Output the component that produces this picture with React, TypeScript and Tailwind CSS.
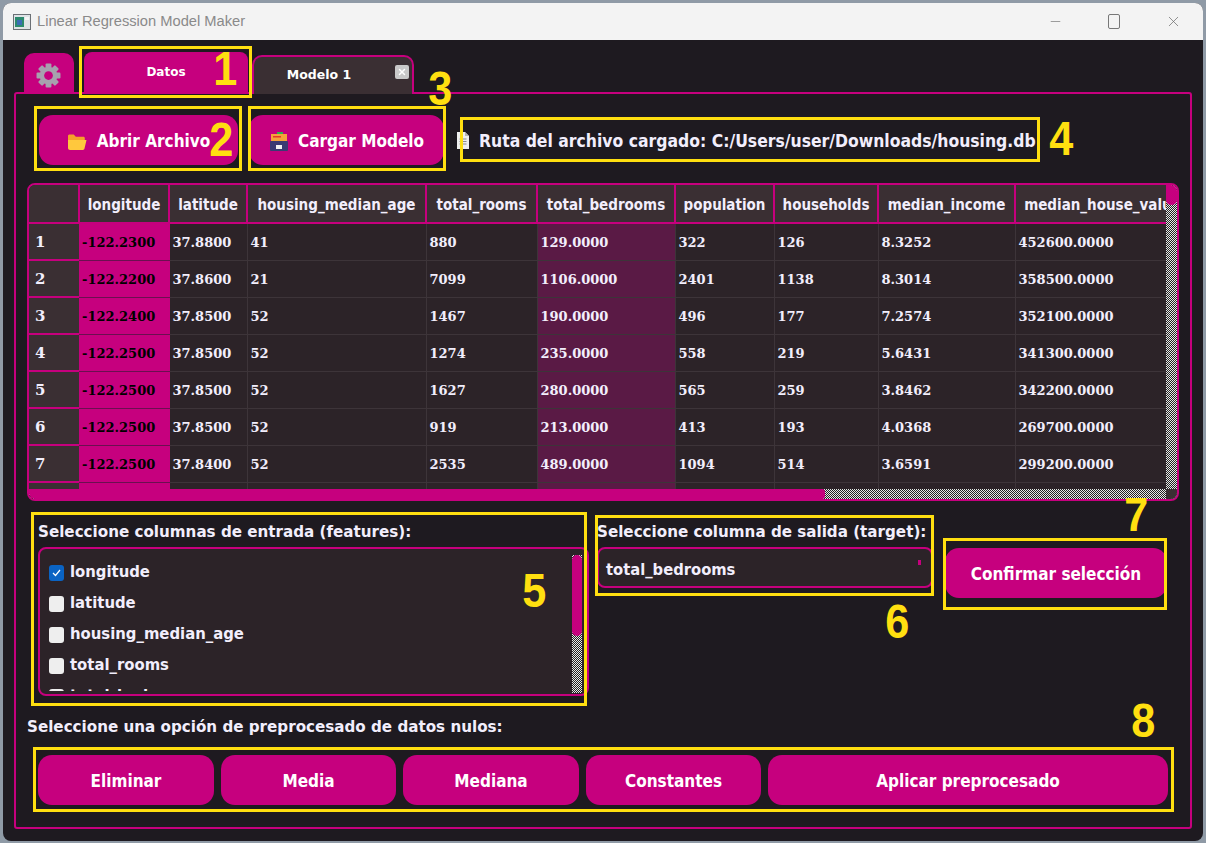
import { Minus, X } from 'lucide-react';

const columns = [
  { name: 'longitude', w: 'w-[90px]' },
  { name: 'latitude', w: 'w-[78px]' },
  { name: 'housing_median_age', w: 'w-[179px]' },
  { name: 'total_rooms', w: 'w-[111px]' },
  { name: 'total_bedrooms', w: 'w-[138px]' },
  { name: 'population', w: 'w-[99px]' },
  { name: 'households', w: 'w-[104px]' },
  { name: 'median_income', w: 'w-[137px]' },
  { name: 'median_house_value', w: 'w-[175px]' },
];

const rows = [
  ['-122.2300', '37.8800', '41', '880', '129.0000', '322', '126', '8.3252', '452600.0000'],
  ['-122.2200', '37.8600', '21', '7099', '1106.0000', '2401', '1138', '8.3014', '358500.0000'],
  ['-122.2400', '37.8500', '52', '1467', '190.0000', '496', '177', '7.2574', '352100.0000'],
  ['-122.2500', '37.8500', '52', '1274', '235.0000', '558', '219', '5.6431', '341300.0000'],
  ['-122.2500', '37.8500', '52', '1627', '280.0000', '565', '259', '3.8462', '342200.0000'],
  ['-122.2500', '37.8500', '52', '919', '213.0000', '413', '193', '4.0368', '269700.0000'],
  ['-122.2500', '37.8400', '52', '2535', '489.0000', '1094', '514', '3.6591', '299200.0000'],
  ['', '', '', '', '', '', '', '', ''],
];

const features = ['longitude', 'latitude', 'housing_median_age', 'total_rooms', 'total_bedrooms'];

const checker = 'bg-[conic-gradient(#e8e8e8_25%,#222_0_50%,#e8e8e8_0_75%,#222_0)] bg-[length:2px_2px]';
const condensed = "font-['DejaVu_Sans_Condensed','DejaVu_Sans',sans-serif]";

function Mark({ className }: { className: string }) {
  return <div className={`absolute z-20 border-[3px] border-[#ffdf10] pointer-events-none ${className}`} />;
}

function Num({ n, className }: { n: string; className: string }) {
  return (
    <div className={`absolute z-20 text-[48px] leading-none font-bold text-[#ffdf10] scale-x-[0.9] font-['Liberation_Sans',sans-serif] pointer-events-none ${className}`}>
      {n}
    </div>
  );
}

function FolderIcon() {
  return (
    <svg width="20" height="18" viewBox="0 0 20 18">
      <path d="M1 3C1 2 1.800 1.500 2.600 1.500h4.200l2 2.200h7.600c.8 0 1.400.6 1.400 1.400V7H1z" fill="#f5a02a" />
      <path d="M1 7h18.500l-2 8.600c-.1.8-.8 1.400-1.600 1.400H3c-1.100 0-2-.9-2-2z" fill="#ffc83d" />
    </svg>
  );
}

function BoxIcon() {
  return (
    <svg width="20" height="20" viewBox="0 0 20 20">
      <rect x="8" y="0" width="6" height="3" fill="#2fb350" />
      <rect x="2" y="2" width="16" height="7" fill="#f5a33a" />
      <rect x="4" y="4" width="8" height="1.500" fill="#e5352b" />
      <rect x="1" y="9" width="18" height="10" rx="1" fill="#3a3a72" />
      <rect x="7" y="13" width="6" height="4" fill="#f1f1f1" />
    </svg>
  );
}

function PageIcon() {
  return (
    <svg width="14" height="17" viewBox="0 0 14 17">
      <path d="M1 0h8l4 4v13H1z" fill="#eeeeee" />
      <path d="M9 0l4 4H9z" fill="#b5b5b5" />
      <path d="M3.500 7h7M3.500 9.500h7M3.500 12h7" stroke="#8a8a8a" strokeWidth="1" />
    </svg>
  );
}

function GearIcon() {
  return (
    <svg width="25" height="25" viewBox="0 0 24 24">
      {[0, 45, 90, 135].map((a) => (
        <rect key={a} x="9.200" y="0.500" width="5.600" height="23" rx="1" fill="#a7a1ae" transform={`rotate(${a} 12 12)`} />
      ))}
      <circle cx="12" cy="12" r="8.500" fill="#a7a1ae" />
      <circle cx="12" cy="12" r="4.200" fill="#c6007e" />
    </svg>
  );
}

function AppIcon() {
  return (
    <svg width="18" height="16" viewBox="0 0 18 16">
      <rect x="0.500" y="0.500" width="17" height="15" fill="#dfe3e6" stroke="#6b7075" />
      <rect x="2" y="3" width="9" height="10" fill="#2c8a6e" />
      <rect x="4" y="6" width="5" height="5" fill="#3a6db5" />
      <rect x="12" y="3" width="4" height="3" fill="#f5f5f5" />
    </svg>
  );
}

function Btn({ children, className }: { children: React.ReactNode; className: string }) {
  return (
    <button className={`h-[50px] rounded-[14px] bg-[#c6007e] text-white text-[17px] font-bold flex items-center justify-center pt-[4px] ${condensed} ${className}`}>
      {children}
    </button>
  );
}

export default function App() {
  return (
    <div className="relative w-[1206px] h-[843px] overflow-hidden bg-[#8f9aa6] font-['DejaVu_Sans',sans-serif] pt-[3px] pl-[3px] pr-[3px] pb-[2px]">
      <div className="h-full rounded-t-lg rounded-b-lg overflow-hidden bg-[#1e1a20] flex flex-col">
        {/* title bar */}
        <div className="h-[37px] shrink-0 bg-[#f3f3f3] flex items-center pl-[10px] text-[#8a8a8a] text-[14.7px] font-['Liberation_Sans',sans-serif]">
          <AppIcon />
          <span className="ml-[6px]">Linear Regression Model Maker</span>
          <div className="ml-auto flex items-center text-[#666] gap-[45px] pr-[21px]">
            <Minus size={15} strokeWidth={1} />
            <div className="w-[12px] h-[15px] rounded-[2px] border border-[#777]" />
            <X size={17} strokeWidth={1} />
          </div>
        </div>

        <div className="flex-1 flex flex-col pl-[11px] pr-[11px] pb-[12px]">
          {/* tabs */}
          <div className="h-[54px] shrink-0 flex items-end pl-[10px] -mb-[2px] relative z-10">
            <div className="w-[50px] h-[41px] rounded-t-[10px] bg-[#c6007e] flex items-center justify-center pr-[2px] pt-[4px]">
              <GearIcon />
            </div>
            <div className="ml-[10px] w-[164px] h-[40px] mb-[2px] rounded-t-[8px] bg-[#c6007e] text-white text-[12px] font-bold flex items-center justify-center">
              Datos
            </div>
            <div className="ml-[4px] w-[162px] h-[39px] rounded-t-[10px] border-2 border-b-0 border-[#c6007e] bg-[#3a2f33] text-white text-[12.5px] font-bold flex items-center justify-center pr-[28px] relative">
              Modelo 1
              <span className="absolute right-[3px] top-[8px] w-[14px] h-[14px] rounded-[2px] bg-[#c9c9c9] flex items-center justify-center">
                <X size={10} strokeWidth={3.5} className="text-white" />
              </span>
            </div>
          </div>

          {/* main pane */}
          <div className="flex-1 rounded-[3px] border-2 border-[#c6007e] pl-[11px] pr-[11px] pt-[21px] flex flex-col">
            <div className="flex items-center h-[50px] shrink-0">
              <Btn className="ml-[12px] w-[199px] gap-[10px]">
                <FolderIcon />
                Abrir Archivo
              </Btn>
              <Btn className="ml-[11px] w-[195px] gap-[9px]">
                <BoxIcon />
                Cargar Modelo
              </Btn>
              <div className={`ml-[12px] pt-[2px] flex items-center gap-[9px] text-[#f2eefc] text-[17.4px] font-bold whitespace-nowrap ${condensed}`}>
                <PageIcon />
                Ruta del archivo cargado: C:/Users/user/Downloads/housing.db
              </div>
            </div>

            {/* table */}
            <div className="mt-[18px] w-[1152px] h-[318px] shrink-0 rounded-[8px] border-2 border-[#c6007e] overflow-hidden relative bg-[#2c2328]">
              <table className="table-fixed border-collapse w-[1161px] text-[13px] font-bold text-[#f2eefc] font-['DejaVu_Serif',serif]">
                <colgroup>
                  <col className="w-[50px]" />
                  {columns.map((c) => (
                    <col key={c.name} className={c.w} />
                  ))}
                </colgroup>
                <thead>
                  <tr className="h-[38px] bg-[#3a2f33]">
                    <th className="border-r-2 border-b-2 border-[#c6007e]" />
                    {columns.map((c) => (
                      <th key={c.name} className={`pt-[4px] border-r-2 border-b-2 border-[#c6007e] font-bold text-[15px] text-center whitespace-nowrap overflow-hidden ${condensed}`}>
                        {c.name}
                      </th>
                    ))}
                  </tr>
                </thead>
                <tbody>
                  {rows.map((row, i) => (
                    <tr key={i} className="h-[37px]">
                      <td className="bg-[#3a2f33] border-b-2 border-[#c6007e] pl-[6px] pt-[2px] text-[15px]">{i < 7 ? i + 1 : ''}</td>
                      {row.map((v, j) => (
                        <td
                          key={j}
                          className={`pl-[3px] pt-[2px] border-b border-r border-[#3d3439] ${
                            j === 0
                              ? 'bg-[#c6007e] text-black border-b-[#6b1050] border-r-[#c6007e]'
                              : j === 4
                                ? 'bg-[#5a1a45]'
                                : ''
                          }`}
                        >
                          {v}
                        </td>
                      ))}
                    </tr>
                  ))}
                </tbody>
              </table>
              {/* scrollbars */}
              <div className={`absolute right-0 top-0 bottom-0 w-[11px] ${checker}`}>
                <div className="h-[20px] rounded-b-[5px] bg-[#c6007e]" />
              </div>
              <div className={`absolute left-0 right-0 bottom-0 h-[10px] ${checker}`}>
                <div className="w-[796px] h-full rounded-r-[3px] bg-[#c6007e]" />
              </div>
              <div className="absolute right-0 bottom-0 w-[11px] h-[10px] bg-[#3a2f33]" />
            </div>

            {/* selection */}
            <div className="mt-[20px] flex shrink-0 h-[194px]">
              <div className="ml-[11px] w-[551px]">
                <div className="h-[25px] text-[15.15px] font-bold text-[#f2eefc] whitespace-nowrap">Seleccione columnas de entrada (features):</div>
                <div className="mt-[1px] h-[149px] rounded-[8px] border-2 border-[#c6007e] bg-[#2c2328] pl-[9px] pt-[8px] relative">
                  <div className="h-[134px] overflow-hidden">
                    {features.map((f, i) => (
                      <div key={f} className={`h-[31px] flex items-center gap-[6px] text-[16.5px] font-bold text-[#f2eefc] whitespace-nowrap ${condensed}`}>
                        <span className={`w-[15px] h-[16px] rounded-[3px] flex items-center justify-center ${i === 0 ? 'bg-[#0a63c4]' : 'bg-[#eeeeee]'}`}>
                          {i === 0 && (
                            <svg width="9" height="8" viewBox="0 0 9 8">
                              <path d="M1 4l2.500 2.500L8 1" stroke="white" strokeWidth="1.200" fill="none" />
                            </svg>
                          )}
                        </span>
                        {f}
                      </div>
                    ))}
                  </div>
                  <div className={`absolute right-[5px] top-[6px] bottom-[1px] w-[10px] ${checker}`}>
                    <div className="h-[81px] rounded-[5px] bg-[#c6007e]" />
                  </div>
                </div>
              </div>
              <div className="ml-[8px] w-[336px]">
                <div className="h-[25px] text-[15.15px] font-bold text-[#f2eefc] whitespace-nowrap">Seleccione columna de salida (target):</div>
                <div className={`mt-[1px] h-[41px] rounded-[8px] border-2 border-[#c6007e] bg-[#2c2328] flex items-center pl-[7px] pt-[5px] text-[16.4px] font-bold text-[#f2eefc] relative ${condensed}`}>
                  total_bedrooms
                  <span className="absolute right-[10px] top-[11px] w-[3px] h-[5px] bg-[#c6007e]" />
                </div>
              </div>
              <div className="ml-[12px] pt-[27px]">
                <Btn className="w-[222px]">Confirmar selección</Btn>
              </div>
            </div>

            <div className="h-[24px] pt-[1px] flex items-center text-[15.15px] font-bold text-[#f2eefc] whitespace-nowrap">Seleccione una opción de preprocesado de datos nulos:</div>
            <div className="mt-[16px] ml-[11px] flex gap-[7px]">
              <Btn className="w-[176px]">Eliminar</Btn>
              <Btn className="w-[175px]">Media</Btn>
              <Btn className="w-[176px]">Mediana</Btn>
              <Btn className="w-[175px]">Constantes</Btn>
              <Btn className="w-[400px]">Aplicar preprocesado</Btn>
            </div>
          </div>
        </div>
      </div>

      {/* yellow annotations drawn on the screenshot */}
      <Mark className="left-[79px] top-[46px] w-[173px] h-[52px]" />
      <Mark className="left-[34px] top-[106px] w-[208px] h-[65px]" />
      <Mark className="left-[248px] top-[106px] w-[198px] h-[65px]" />
      <Mark className="left-[460px] top-[117px] w-[580px] h-[45px]" />
      <Mark className="left-[31px] top-[512px] w-[556px] h-[194px]" />
      <Mark className="left-[595px] top-[515px] w-[339px] h-[81px]" />
      <Mark className="left-[943px] top-[538px] w-[224px] h-[72px]" />
      <Mark className="left-[33px] top-[747px] w-[1141px] h-[65px]" />
      <Num n="1" className="left-[212px] top-[45px]" />
      <Num n="2" className="left-[208px] top-[116px]" />
      <Num n="3" className="left-[427px] top-[65px]" />
      <Num n="4" className="left-[1048px] top-[115px]" />
      <Num n="5" className="left-[521px] top-[567px]" />
      <Num n="6" className="left-[884px] top-[598px]" />
      <Num n="7" className="left-[1123px] top-[491px]" />
      <Num n="8" className="left-[1130px] top-[697px]" />
    </div>
  );
}
